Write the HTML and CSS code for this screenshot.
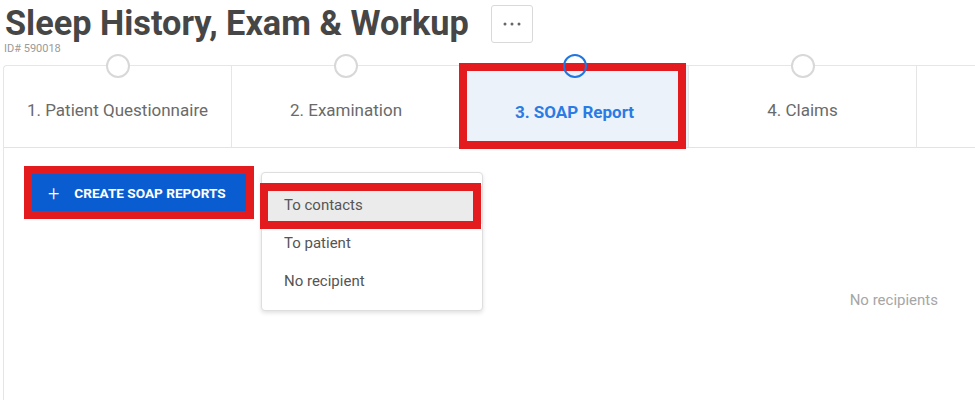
FILE: index.html
```html
<!DOCTYPE html>
<html lang="en">
<head>
    <meta charset="UTF-8">
    <meta name="viewport" content="width=device-width, initial-scale=1.0">
    <title>Sleep History, Exam &amp; Workup</title>
    <link rel="stylesheet" href="styles.css">
</head>
<body>
    <header class="page-header">
        <div class="title-row">
            <h1>Sleep History, Exam &amp; Workup</h1>
            <button class="more-btn" aria-label="More">
                <svg width="20" height="4" viewBox="0 0 20 4"><circle cx="3" cy="2" r="1.5"/><circle cx="10" cy="2" r="1.5"/><circle cx="17" cy="2" r="1.5"/></svg>
            </button>
        </div>
        <div class="record-id">ID# 590018</div>
    </header>
    <div class="card">
        <div class="steps">
            <div class="step"><span class="dot"></span>1. Patient Questionnaire</div>
            <div class="step"><span class="dot"></span>2. Examination</div>
            <div class="step active"><span class="dot"></span>3. SOAP Report<span class="mark"></span></div>
            <div class="step"><span class="dot"></span>4. Claims</div>
            <div class="step empty"></div>
        </div>
        <div class="card-body">
            <div class="create-wrap">
                <button class="create-btn"><span class="plus">+</span>CREATE SOAP REPORTS</button>
                <span class="mark"></span>
                <ul class="menu">
                    <li class="selected">To contacts<span class="mark"></span></li>
                    <li>To patient</li>
                    <li>No recipient</li>
                </ul>
            </div>
            <div class="no-recipients">No recipients</div>
        </div>
    </div>
</body>
</html>
```

FILE: styles.css
```css
html {
    overflow: hidden;
}
body {
    margin: 0;
    font-family: Roboto, 'Liberation Sans', Arial, sans-serif;
    background: #fff;
    color: #555;
}
.page-header {
    padding: 3px 0 0 5px;
}
.title-row {
    display: flex;
    align-items: center;
    gap: 22px;
}
h1 {
    margin: 0;
    font-size: 34.3px;
    line-height: 38px;
    font-weight: 700;
    color: #464646;
}
.more-btn {
    width: 42px;
    height: 38px;
    margin-top: 2px;
    border: 1px solid #d9d9d9;
    border-radius: 3px;
    background: #fff;
    display: flex;
    align-items: center;
    justify-content: center;
    padding: 0;
}
.more-btn svg {
    fill: #666;
}
.record-id {
    font-size: 11px;
    line-height: 12px;
    color: #9a9a9a;
    margin-left: -1px;
}
.card {
    margin: 10px -12px 0 3px;
    border: 1px solid #e6e6e6;
    border-right: none;
    border-bottom: none;
    border-radius: 4px 0 0 0;
    height: 334px;
}
.steps {
    display: grid;
    grid-template-columns: 228px 229px 228px 228px 1fr;
}
.step {
    position: relative;
    box-sizing: border-box;
    height: 82px;
    border-right: 1px solid #e6e6e6;
    border-bottom: 1px solid #e3e3e3;
    display: flex;
    align-items: center;
    justify-content: center;
    padding-top: 6px;
    font-size: 17px;
    color: #6a6a6a;
}
.step.empty {
    border-right: none;
}
.dot {
    position: absolute;
    top: -12px;
    left: 50%;
    margin-left: -12px;
    width: 20px;
    height: 20px;
    border: 2px solid #d8d8d8;
    border-radius: 50%;
    background: #fff;
    z-index: 2;
}
.step.active {
    background: #ecf2fa;
    color: #2a7be4;
    font-weight: 700;
    padding-top: 10px;
}
.step.active .dot {
    border-color: #1f76e0;
    background: transparent;
}
.mark {
    position: absolute;
    border: 8px solid #e31b1f;
    pointer-events: none;
    z-index: 1;
}
.step .mark {
    top: -3px;
    left: -2px;
    right: 2px;
    bottom: -2px;
}
.card-body {
    padding: 26px 49px 0 28px;
}
.create-wrap {
    position: relative;
    display: inline-block;
}
.create-btn {
    display: flex;
    align-items: center;
    width: 214px;
    height: 37px;
    padding: 0 0 0 16px;
    border: none;
    background: #0a5dd0;
    color: #fff;
    font-family: inherit;
    font-size: 13.6px;
    font-weight: 700;
    letter-spacing: 0;
}
.plus {
    font-size: 20px;
    font-weight: 300;
    margin-right: 15px;
    line-height: 1;
}
.create-wrap > .mark {
    top: -8px;
    left: -8px;
    right: -8px;
    bottom: -8px;
}
.menu {
    position: absolute;
    top: -2px;
    left: 229px;
    width: 222px;
    box-sizing: border-box;
    margin: 0;
    padding: 13px 0 10px;
    list-style: none;
    background: #fff;
    border: 1px solid #dedede;
    border-radius: 4px;
    box-shadow: 0 2px 4px rgba(0, 0, 0, 0.12);
    z-index: 3;
}
.menu li {
    position: relative;
    height: 38px;
    line-height: 38px;
    padding-left: 22px;
    font-size: 15px;
    color: #555;
}
.menu li.selected {
    background: #ebebeb;
}
.menu li .mark {
    top: -3px;
    left: -2px;
    right: 1px;
    bottom: -5px;
}
.no-recipients {
    margin-top: 79px;
    text-align: right;
    font-size: 15px;
    line-height: 20px;
    color: #a6a6a6;
}
```
